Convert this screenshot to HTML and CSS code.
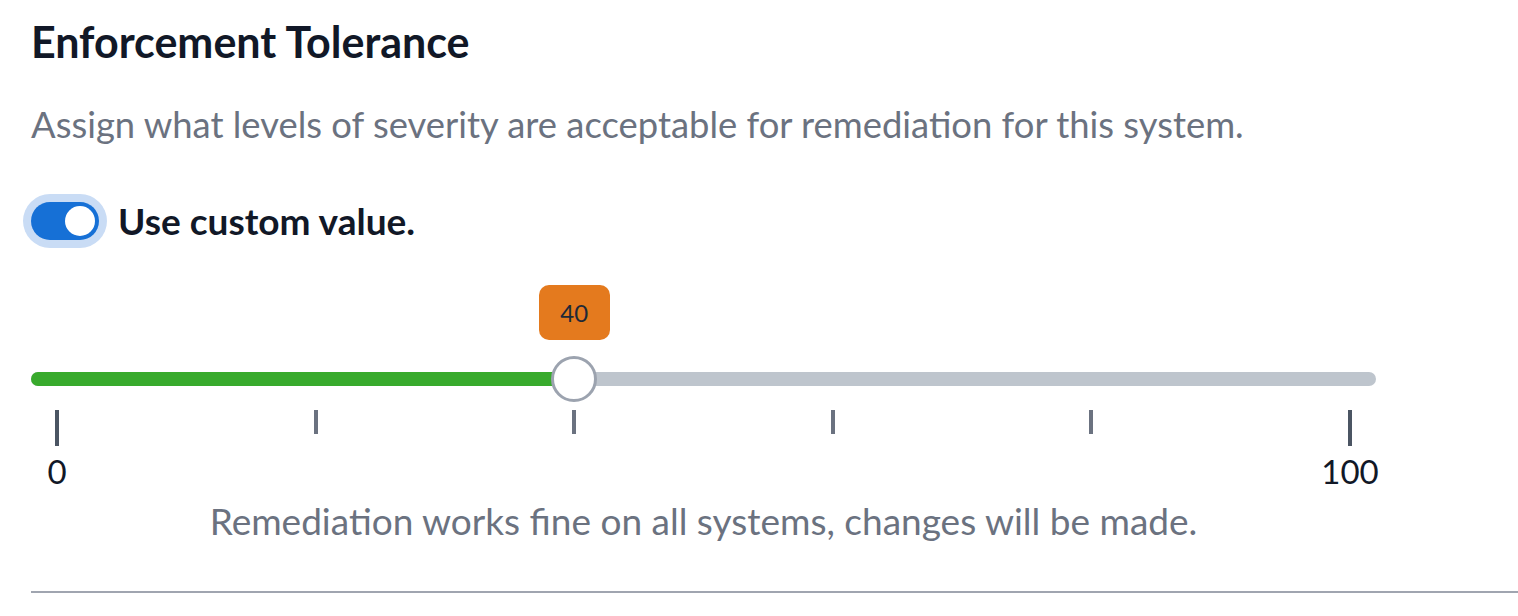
FILE: index.html
```html
<!DOCTYPE html>
<html lang="en">
<head>
    <meta charset="UTF-8">
    <meta name="viewport" content="width=device-width, initial-scale=1.0">
    <title>Enforcement Tolerance</title>
    <link rel="stylesheet" href="styles.css">
</head>
<body>
    <div class="panel">
        <h2 class="title">Enforcement Tolerance</h2>
        <p class="desc">Assign what levels of severity are acceptable for remediation for this system.</p>

        <label class="switch-row">
            <span class="switch"><span class="knob"></span></span>
            <span class="switch-label">Use custom value.</span>
        </label>

        <div class="slider">
            <div class="track-wrap">
                <div class="track">
                    <div class="fill" style="width: calc(26px + 0.4 * (100% - 52px));"></div>
                </div>
                <div class="thumb" style="left: calc(26px + 0.4 * (100% - 52px));">
                    <div class="bubble">40</div>
                </div>
            </div>
            <div class="ticks">
                <div class="tick end"><span class="mark"></span><span class="tick-label">0</span></div>
                <div class="tick"><span class="mark"></span></div>
                <div class="tick"><span class="mark"></span></div>
                <div class="tick"><span class="mark"></span></div>
                <div class="tick"><span class="mark"></span></div>
                <div class="tick end"><span class="mark"></span><span class="tick-label">100</span></div>
            </div>
            <p class="caption">Remediation works fine on all systems, changes will be made.</p>
        </div>

        <hr class="divider">
    </div>
</body>
</html>
```

FILE: styles.css
```css
body {
    margin: 0;
    background-color: #fff;
    font-family: Lato, "Open Sans", sans-serif;
    color: #111827;
}
.panel {
    padding-left: 31px;
}
.title {
    margin: 16px 0 0;
    font-size: 43px;
    line-height: 52px;
    font-weight: 700;
    color: #111827;
}
.desc {
    margin: 34px 0 0;
    font-size: 36.4px;
    line-height: 44px;
    color: #6b7280;
}
.switch-row {
    display: flex;
    align-items: center;
    gap: 19px;
    margin-top: 55px;
}
.switch {
    position: relative;
    width: 68px;
    height: 38px;
    border-radius: 19px;
    background-color: #1670d6;
    box-shadow: 0 0 0 8px #c9dcf5;
}
.knob {
    position: absolute;
    top: 4px;
    right: 4px;
    width: 30px;
    height: 30px;
    border-radius: 50%;
    background-color: #fff;
}
.switch-label {
    font-size: 37px;
    line-height: 40px;
    font-weight: 700;
}
.slider {
    width: 1345px;
}
.track-wrap {
    position: relative;
    height: 46px;
    margin-top: 115px;
}
.track {
    position: relative;
    top: 16px;
    height: 14px;
    border-radius: 7px;
    background-color: #bec5cd;
}
.fill {
    height: 100%;
    border-radius: 7px;
    background-color: #38aa2c;
}
.thumb {
    position: absolute;
    top: 0;
    width: 40px;
    height: 40px;
    margin-left: -23px;
    border: 3px solid #9ca3af;
    border-radius: 50%;
    background-color: #fff;
}
.bubble {
    position: absolute;
    bottom: 59px;
    left: 50%;
    width: 71px;
    height: 55px;
    margin-left: -35.5px;
    border-radius: 10px;
    background-color: #e47a1e;
    color: #1f2937;
    font-size: 24px;
    line-height: 55px;
    text-align: center;
}
.ticks {
    display: flex;
    justify-content: space-between;
    align-items: flex-start;
    margin-top: 8px;
    padding: 0 24px;
}
.tick {
    display: flex;
    flex-direction: column;
    align-items: center;
    width: 4px;
}
.mark {
    display: block;
    width: 4px;
    height: 24px;
    background-color: #6b7280;
}
.tick.end .mark {
    height: 36px;
    background-color: #4b5563;
}
.tick-label {
    margin-top: 5px;
    font-size: 33px;
    line-height: 40px;
    color: #111827;
    white-space: nowrap;
}
.caption {
    margin: 10px 0 0;
    font-size: 37px;
    line-height: 40px;
    color: #6b7280;
    text-align: center;
}
.divider {
    margin: 50px 0 0;
    border: none;
    height: 2px;
    background-color: #a0a5b0;
}
```
